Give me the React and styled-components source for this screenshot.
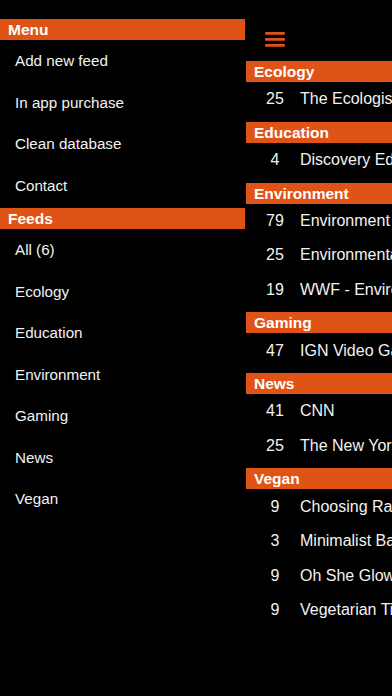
import styled, { createGlobalStyle } from "styled-components";

const ORANGE = "#DF5316";

const GlobalStyle = createGlobalStyle`
  html, body {
    margin: 0;
    padding: 0;
    background: #000;
  }
  body {
    font-family: "Liberation Sans", Arial, Helvetica, sans-serif;
    overflow: hidden;
  }
`;

const menuItems = ["Add new feed", "In app purchase", "Clean database", "Contact"];
const feedItems = ["All (6)", "Ecology", "Education", "Environment", "Gaming", "News", "Vegan"];

const sections = [
  { title: "Ecology", rows: [[25, "The Ecologist"]] },
  { title: "Education", rows: [[4, "Discovery Education"]] },
  {
    title: "Environment",
    rows: [
      [79, "Environment News"],
      [25, "Environmental Leader"],
      [19, "WWF - Environment"],
    ],
  },
  { title: "Gaming", rows: [[47, "IGN Video Games"]] },
  {
    title: "News",
    rows: [
      [41, "CNN"],
      [25, "The New York Times"],
    ],
  },
  {
    title: "Vegan",
    rows: [
      [9, "Choosing Raw"],
      [3, "Minimalist Baker"],
      [9, "Oh She Glows"],
      [9, "Vegetarian Times"],
    ],
  },
];

export default function App() {
  return (
    <>
      <GlobalStyle />
      <Screen>
        <Sidebar>
          <SideHeader>Menu</SideHeader>
          {menuItems.map((m) => (
            <SideItem key={m}>{m}</SideItem>
          ))}
          <SideHeader $gap>Feeds</SideHeader>
          {feedItems.map((f) => (
            <SideItem key={f}>{f}</SideItem>
          ))}
        </Sidebar>

        <Main>
          <NavBar>
            <svg width="20" height="15" viewBox="0 0 20 15">
              <rect x="0" y="0" width="20" height="2.8" rx="1" fill={ORANGE} />
              <rect x="0" y="6" width="20" height="2.8" rx="1" fill={ORANGE} />
              <rect x="0" y="12" width="20" height="2.8" rx="1" fill={ORANGE} />
            </svg>
          </NavBar>
          {sections.map((s) => (
            <Section key={s.title}>
              <SectionHeader>{s.title}</SectionHeader>
              {s.rows.map(([count, name]) => (
                <FeedRow key={name}>
                  <Count>{count}</Count>
                  <Title>{name}</Title>
                </FeedRow>
              ))}
            </Section>
          ))}
        </Main>
      </Screen>
    </>
  );
}

const Screen = styled.div`
  display: flex;
  width: 392px;
  height: 696px;
  overflow: hidden;
  background: #000;
`;

const Sidebar = styled.nav`
  flex: 0 0 246px;
  width: 246px;
  padding-top: 19px;
  box-sizing: border-box;
  display: flex;
  flex-direction: column;
`;

const SideHeader = styled.div`
  height: 21px;
  width: 245px;
  margin-top: ${(p) => (p.$gap ? "2px" : "0")};
  background: ${ORANGE};
  color: #fff;
  font-size: 15.5px;
  font-weight: 700;
  line-height: 21px;
  padding-left: 8px;
  box-sizing: border-box;
`;

const SideItem = styled.div`
  height: 41.5px;
  display: flex;
  align-items: center;
  padding-left: 15px;
  color: #f2f2f2;
  font-size: 15.2px;
`;

const Main = styled.main`
  flex: 0 0 400px;
  display: flex;
  flex-direction: column;
`;

const NavBar = styled.div`
  height: 61px;
  box-sizing: border-box;
  padding: 32px 0 0 19px;
`;

const Section = styled.section`
  margin-bottom: 5.3px;
`;

const SectionHeader = styled.div`
  height: 21px;
  background: ${ORANGE};
  color: #fff;
  font-size: 15.5px;
  font-weight: 700;
  line-height: 21px;
  padding-left: 8px;
`;

const FeedRow = styled.div`
  height: 34.5px;
  display: flex;
  align-items: center;
  color: #f2f2f2;
  font-size: 16px;
  white-space: nowrap;
`;

const Count = styled.span`
  width: 54px;
  padding-left: 4px;
  box-sizing: border-box;
  text-align: center;
  flex-shrink: 0;
`;

const Title = styled.span`
  padding-left: 0;
`;
